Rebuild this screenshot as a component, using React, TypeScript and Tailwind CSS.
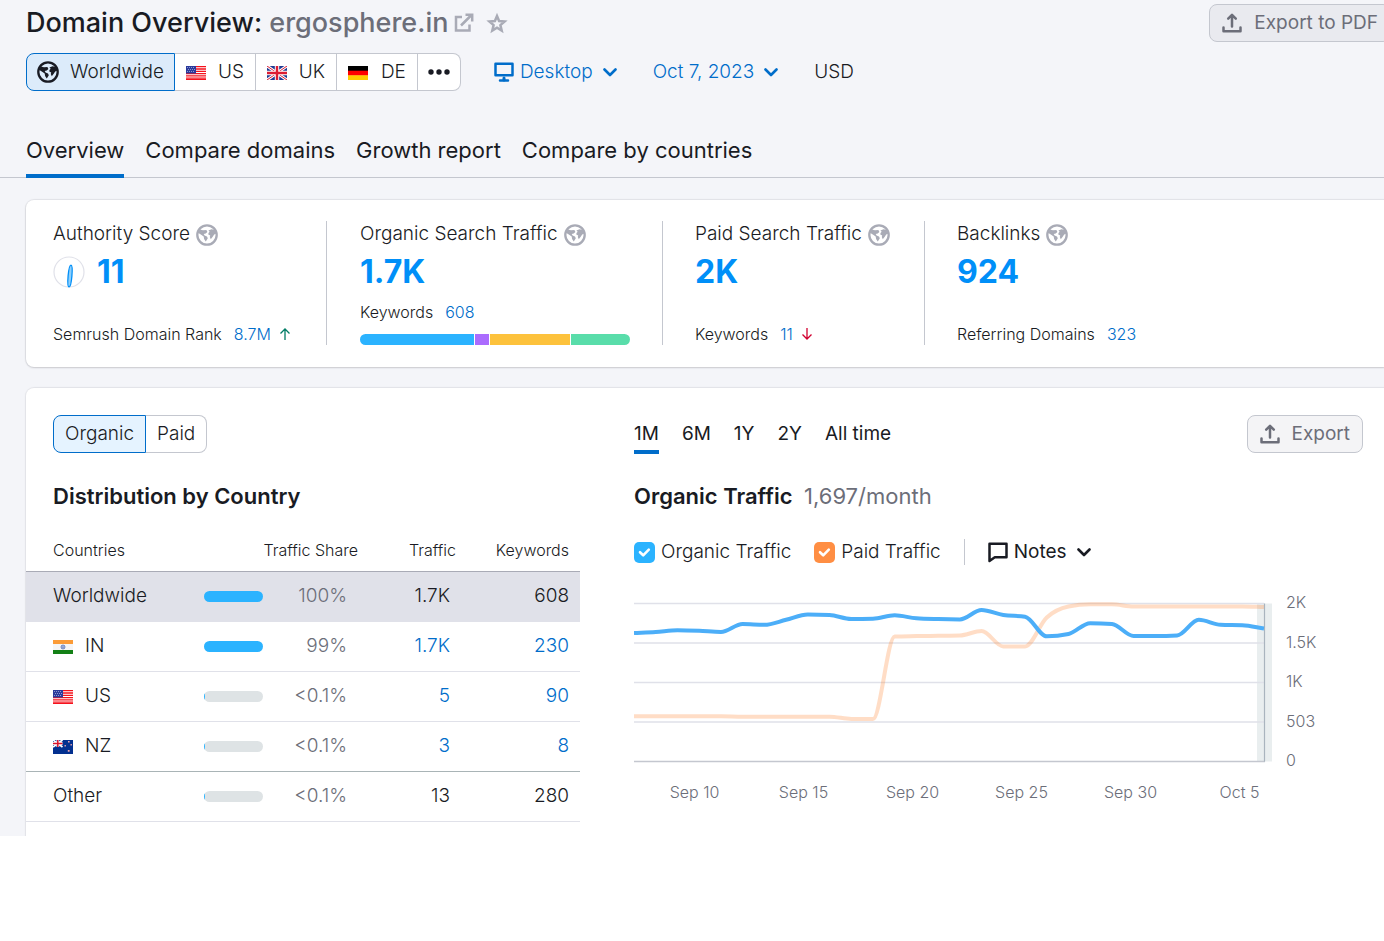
import { useState, ReactNode } from 'react'

interface CountryRow {
  code: string
  flag?: 'in' | 'us' | 'nz'
  share: string
  percent: number
  traffic: string
  keywords: string
  linked: boolean
}

const ROWS: CountryRow[] = [
  { code: 'Worldwide', share: '100%', percent: 100, traffic: '1.7K', keywords: '608', linked: false },
  { code: 'IN', flag: 'in', share: '99%', percent: 100, traffic: '1.7K', keywords: '230', linked: true },
  { code: 'US', flag: 'us', share: '<0.1%', percent: 2, traffic: '5', keywords: '90', linked: true },
  { code: 'NZ', flag: 'nz', share: '<0.1%', percent: 2, traffic: '3', keywords: '8', linked: true },
  { code: 'Other', share: '<0.1%', percent: 2, traffic: '13', keywords: '280', linked: false },
]

// Daily values, one per day, already in plot units (0 = 2K line, 158 = zero line)
const ORGANIC = [
  29.5, 28.5, 26.7, 27.3, 28.5, 20.5, 21.3, 16.3, 11, 11.5, 15.5, 15.2, 11.8, 14.8, 15.6,
  15.9, 6.5, 11.5, 13.2, 32.8, 30.5, 19.7, 20.5, 32.6, 32.6, 32, 16.3, 21.3, 21.8, 25,
]
const PAID = [
  112.8, 112.8, 112.8, 112.8, 112.8, 113.2, 113.2, 113.2, 113.2, 113.2, 115.4, 115.6, 33, 32.6, 32.3,
  32, 27.5, 43, 43, 14, 3, 0.8, 0.8, 3, 3, 3, 3, 3, 3, 3.6,
]

const BREAKDOWN = [
  { color: 'bg-[#2bb3ff]', value: 114 },
  { color: 'bg-[#ab6cfe]', value: 14 },
  { color: 'bg-[#fdc23c]', value: 80 },
  { color: 'bg-[#59ddaa]', value: 59 },
]

// Monotone cubic, so flat stretches stay flat and steps don't overshoot
function monotonePath(values: number[], width: number, top: number) {
  const h = width / (values.length - 1)
  const d = values.slice(1).map((v, i) => (v - values[i]) / h)
  const m = values.map((_, i) => {
    if (i === 0) return d[0]
    if (i === values.length - 1) return d[i - 1]
    if (d[i - 1] * d[i] <= 0) return 0
    return Math.sign(d[i]) * Math.min(Math.abs(d[i - 1]), Math.abs(d[i]), Math.abs(d[i - 1] + d[i]) / 4) * 2
  })
  let out = `M0 ${values[0] + top}`
  for (let i = 1; i < values.length; i++) {
    const x0 = (i - 1) * h
    const x1 = i * h
    const a = values[i - 1] + top
    const b = values[i] + top
    out += `C${x0 + h / 3} ${a + (m[i - 1] * h) / 3} ${x1 - h / 3} ${b - (m[i] * h) / 3} ${x1} ${b}`
  }
  return out
}

function Globe({ className = '' }: { className?: string }) {
  return (
    <svg viewBox="0 0 22 22" className={`size-[22px] shrink-0 ${className}`} aria-hidden="true">
      <circle cx="11" cy="11" r="9.7" fill="none" stroke="currentColor" strokeWidth="2.3" />
      <path d="M1.6 8.6 4 5.4 7 6.3 10.4 6l1 2-1.7 1.5-2 .4.9 1.7 2.4 1 .8 1.7-1.2 2-.9 1.2-1.6-2.6-.4-2.4-2.9-1.9z" fill="currentColor" />
      <path d="m12.4 6.6 3.2-1.4 3.6.8 1.2 3.6-2.2 1-1.5 2.2-1.9 2.4-1-2.2.4-1.6-1.9-.8.2-1.6 1.2-1.2z" fill="currentColor" />
    </svg>
  )
}

function Chevron() {
  return (
    <svg viewBox="0 0 14 10" className="h-2.5 w-3.5 shrink-0" fill="none" stroke="currentColor" strokeWidth="2.6" strokeLinecap="round" strokeLinejoin="round" aria-hidden="true">
      <path d="m1.5 2.5 5.5 5.5 5.5-5.5" />
    </svg>
  )
}

function Upload() {
  return (
    <svg viewBox="0 0 20 20" className="size-5 shrink-0" fill="none" stroke="currentColor" strokeWidth="2.5" strokeLinecap="round" strokeLinejoin="round" aria-hidden="true">
      <path d="M1.5 14.5v3.8h17v-3.8M10 13.5V2.5M6.2 5.6 10 1.8l3.8 3.8" />
    </svg>
  )
}

function Flag({ code }: { code: string }) {
  return (
    <svg viewBox="0 0 20 14" className="mt-0.5 h-3.5 w-5 shrink-0" aria-hidden="true">
      {code === 'us' && (
        <>
          <path d="M0 0h20v14H0z" fill="#fff" />
          <path d="M0 .7h20M0 3h20M0 5.3h20M0 7.6h20M0 9.9h20M0 12.2h20M0 13.6h20" stroke="#f5121c" strokeWidth="1.3" />
          <path d="M0 0h10v7.5H0z" fill="#2a3a9c" />
          <path d="M1 1.5h8M2 3.5h7M1 5.5h8" stroke="#a6aedb" strokeWidth=".8" strokeDasharray="1 1" />
        </>
      )}
      {code === 'uk' && (
        <>
          <path d="M0 0h20v14H0z" fill="#1e3a93" />
          <path d="m0 0 20 14M20 0 0 14" stroke="#fff" strokeWidth="3" />
          <path d="m0 0 20 14M20 0 0 14" stroke="#dc1c33" strokeWidth="1" />
          <path d="M10 0v14M0 7h20" stroke="#fff" strokeWidth="4.4" />
          <path d="M10 0v14M0 7h20" stroke="#dc1c33" strokeWidth="2.4" />
        </>
      )}
      {code === 'de' && (
        <>
          <path d="M0 0h20v5H0z" fill="#000" />
          <path d="M0 4.7h20v5H0z" fill="#f00" />
          <path d="M0 9.3h20V14H0z" fill="#fc0" />
        </>
      )}
      {code === 'in' && (
        <>
          <path d="M0 0h20v14H0z" fill="#f5f5f5" />
          <path d="M0 0h20v4H0z" fill="#fb9b36" />
          <path d="M0 10h20v4H0z" fill="#138016" />
          <circle cx="10" cy="7" r="2" fill="#b7c4e6" stroke="#4561a8" strokeWidth=".7" />
          <circle cx="10" cy="7" r=".6" fill="#1c3b8c" />
        </>
      )}
      {code === 'nz' && (
        <>
          <path d="M0 0h20v14H0z" fill="#03308f" />
          <path d="m0 0 9.5 7M9.5 0 0 7" stroke="#fff" strokeWidth="1.8" />
          <path d="M4.8 0v7M0 3.5h9.5" stroke="#fff" strokeWidth="2.8" />
          <path d="M4.8 0v7M0 3.5h9.5" stroke="#d8152e" strokeWidth="1.5" />
          <path d="M15 1h1.6v1.6H15zM11.5 5h1.4v1.4h-1.4zM17.5 4h1.4v1.4h-1.4zM14.8 10h1.8v1.8h-1.8z" fill="#e9a3ae" />
        </>
      )}
    </svg>
  )
}

function Metric({ title, value, badge, className, children }: {
  title: string
  value: string
  badge?: ReactNode
  className: string
  children: ReactNode
}) {
  return (
    <div className={`flex h-[124px] shrink-0 flex-col ${className}`}>
      <div className="flex h-[26px] items-center gap-1.5">
        <span>{title}</span>
        <Globe className="mt-0.5 text-[#a9abb6]" />
      </div>
      <div className="mt-[5px] flex h-10 items-center gap-3">
        {badge}
        <a href="#" className="text-[32px] leading-10 font-bold text-[#008ff8]">{value}</a>
      </div>
      {children}
    </div>
  )
}

function SeriesToggle({ label, color }: { label: string; color: string }) {
  return (
    <label className="flex items-center gap-1.5">
      <span className="relative flex size-[21px]">
        <input type="checkbox" defaultChecked className={`peer size-[21px] appearance-none rounded-[5px] border border-[#c4c7cf] checked:border-0 ${color}`} />
        <svg viewBox="0 0 21 21" className="pointer-events-none absolute inset-0 hidden peer-checked:block" fill="none" stroke="#fff" strokeWidth="2.6" strokeLinecap="round" strokeLinejoin="round" aria-hidden="true">
          <path d="m6 10.2 3.2 3.1 5.6-5.6" />
        </svg>
      </span>
      {label}
    </label>
  )
}

function TrafficChart() {
  return (
    <div className="mt-[35px] flex gap-3.5">
      <div className="min-w-0 flex-1">
        <svg viewBox="0 0 638 164" preserveAspectRatio="none" className="block h-[164px] w-full" role="img" aria-label="Organic and paid traffic over the last month">
          <path d="M623 3.5h15v158h-15z" fill="#e9eeef" />
          <path d="M0 3.5h630M0 43h630M0 82.5h630M0 122h630" stroke="#e0e1e9" strokeWidth="1.5" />
          <path d="M0 161.5h631" stroke="#c4c7cf" strokeWidth="1.5" />
          <path d="M630.5 3.5v158" stroke="#a9b4be" strokeWidth="1.2" />
          <path d={monotonePath(PAID, 630, 3.5)} fill="none" stroke="#ff8e43" strokeOpacity=".3" strokeWidth="4" />
          <path d={monotonePath(ORGANIC, 630, 3.5)} fill="none" stroke="#4caef8" strokeWidth="4" />
        </svg>
        <div className="mt-4 -mr-[22px] grid grid-cols-6 pl-1.5 text-center text-base leading-6 text-[#6c6e79]">
          {['Sep 10', 'Sep 15', 'Sep 20', 'Sep 25', 'Sep 30', 'Oct 5'].map((d) => (
            <span key={d}>{d}</span>
          ))}
        </div>
      </div>
      <div className="-mt-2 flex h-[178px] w-[77px] flex-col justify-between text-base leading-5 text-[#6c6e79]">
        {['2K', '1.5K', '1K', '503', '0'].map((t) => (
          <span key={t}>{t}</span>
        ))}
      </div>
    </div>
  )
}

export default function App() {
  const [tab, setTab] = useState('Overview')
  const [range, setRange] = useState('1M')

  return (
    <div className="min-h-screen bg-white font-['Inter',sans-serif] text-[19px] leading-[26px] font-light text-[#191b23]">
      <div className="h-[836px] overflow-hidden bg-[#f4f5f9]">
        <header className="border-b border-[#c4c7cf]">
          <div className="flex items-start justify-between pl-[26px]">
            <div className="flex h-[46px] items-center">
              <h1 className="text-[27px] leading-9 font-medium whitespace-nowrap">
                Domain Overview: <span className="text-[#6c6e79]">ergosphere.in</span>
              </h1>
              <a href="#" className="ml-1.5 text-[#a9abb6]" aria-label="Open ergosphere.in">
                <svg viewBox="0 0 20 20" className="size-5" fill="none" stroke="currentColor" strokeWidth="2.5" aria-hidden="true">
                  <path d="M8 4H2v13.5h13.5V11.5M7 12.5 17.5 2M11.5 1.8h6.7v6.7" />
                </svg>
              </a>
              <button className="ml-3 text-[#a9abb6]" aria-label="Add to favorites">
                <svg viewBox="0 0 22 22" className="size-[22px]" fill="none" stroke="currentColor" strokeWidth="2.5" aria-hidden="true">
                  <path d="m11 4 2.1 5 5.5.5-4.2 3.6 1.3 5.5-4.7-2.9-4.7 2.9 1.3-5.5-4.2-3.6 5.5-.5z" />
                </svg>
              </button>
            </div>
            <button className="mt-1 -mr-[7px] flex h-[38px] items-center gap-3 rounded-lg border border-[#c4c7cf] bg-[#e9eaef] px-3 font-normal whitespace-nowrap text-[#6c6e79]">
              <Upload />
              Export to PDF
            </button>
          </div>

          <div className="mt-[7px] flex items-center pl-[26px]">
            <div className="flex h-[38px]">
              <button className="flex items-center gap-[11px] rounded-l-lg border border-[#006dca] bg-[#dcebfa] px-2.5">
                <Globe />
                Worldwide
              </button>
              {['US', 'UK', 'DE'].map((c) => (
                <button key={c} className="flex w-[81px] items-center justify-between border-y border-r border-[#c4c7cf] bg-white px-[11px]">
                  <Flag code={c.toLowerCase()} />
                  {c}
                </button>
              ))}
              <button className="flex w-[43px] items-center justify-center rounded-r-lg border-y border-r border-[#c4c7cf] bg-white" aria-label="More countries">
                <svg viewBox="0 0 22 6" className="h-1.5 w-[22px]" fill="currentColor" aria-hidden="true">
                  <circle cx="3" cy="3" r="2.7" />
                  <circle cx="11" cy="3" r="2.7" />
                  <circle cx="19" cy="3" r="2.7" />
                </svg>
              </button>
            </div>
            <button className="ml-[33px] flex items-center text-[#006dca]">
              <svg viewBox="0 0 20 20" className="mr-1.5 size-5" fill="none" stroke="currentColor" strokeWidth="2.5" strokeLinecap="round" strokeLinejoin="round" aria-hidden="true">
                <path d="M1.5 1.8h17v11.4h-17zM6 18.5h8" />
                <path d="M10 16v2" strokeWidth="3" />
              </svg>
              <span className="mr-2.5">Desktop</span>
              <Chevron />
            </button>
            <button className="ml-9 flex items-center gap-2.5 text-[#006dca]">
              Oct 7, 2023
              <Chevron />
            </button>
            <span className="ml-9">USD</span>
          </div>

          <nav className="mt-9 flex gap-[21px] pl-[26px]">
            {['Overview', 'Compare domains', 'Growth report', 'Compare by countries'].map((t) => (
              <button
                key={t}
                onClick={() => setTab(t)}
                className={`-mb-px h-[51px] border-b-4 pb-0.5 text-[22px] leading-7 font-normal whitespace-nowrap ${tab === t ? 'border-[#006dca]' : 'border-transparent'}`}
              >
                {t}
              </button>
            ))}
          </nav>
        </header>

        <main className="pl-[26px]">
          <section className="mt-[22px] flex h-[167px] rounded-l-lg bg-white px-[27px] pt-[21px] shadow-[0_0_1px_1px_rgba(25,27,35,0.08),0_1px_2px_rgba(25,27,35,0.12)]">
            <Metric
              title="Authority Score"
              value="11"
              className="w-[274px] border-r border-[#c4c7cf]"
              badge={
                <svg viewBox="0 0 32 32" className="size-8" aria-hidden="true">
                  <circle cx="16" cy="16" r="15" fill="#fff" stroke="#e0e1e9" strokeWidth="1.2" />
                  <ellipse cx="17" cy="20" rx="1.9" ry="11" transform="rotate(5 17 20)" fill="#8fd0fb" stroke="#008ff8" strokeWidth="1.3" />
                </svg>
              }
            >
              <div className="mt-auto flex items-center text-base leading-[22px]">
                Semrush Domain Rank
                <a href="#" className="ml-3 text-[#006dca]">8.7M</a>
                <svg viewBox="0 0 12 12" className="ml-2 size-3" fill="none" stroke="#007c65" strokeWidth="1.3" aria-label="up">
                  <path d="M6 12V1M1.5 5.5 6 1l4.5 4.5" />
                </svg>
              </div>
            </Metric>
            <Metric title="Organic Search Traffic" value="1.7K" className="w-[336px] border-r border-[#c4c7cf] pr-8 pl-[33px]">
              <div className="mt-[9px] flex text-base leading-[22px]">
                Keywords
                <a href="#" className="ml-3 text-[#006dca]">608</a>
              </div>
              <div className="mt-auto flex h-[11px] gap-px overflow-hidden rounded-full">
                {BREAKDOWN.map((b) => (
                  <div key={b.color} className={b.color} style={{ flexGrow: b.value }} />
                ))}
              </div>
            </Metric>
            <Metric title="Paid Search Traffic" value="2K" className="w-[262px] border-r border-[#c4c7cf] pl-8">
              <div className="mt-auto flex items-center text-base leading-[22px]">
                Keywords
                <a href="#" className="ml-3 text-[#006dca]">11</a>
                <svg viewBox="0 0 12 12" className="ml-2 size-3" fill="none" stroke="#d1002f" strokeWidth="1.3" aria-label="down">
                  <path d="M6 0v11M1.5 6.5 6 11l4.5-4.5" />
                </svg>
              </div>
            </Metric>
            <Metric title="Backlinks" value="924" className="pl-8">
              <div className="mt-auto flex text-base leading-[22px]">
                Referring Domains
                <a href="#" className="ml-3 text-[#006dca]">323</a>
              </div>
            </Metric>
          </section>

          <section className="mt-[21px] flex h-[600px] gap-[54px] rounded-l-lg bg-white pt-[27px] shadow-[0_0_1px_1px_rgba(25,27,35,0.08)]">
            <div className="w-[554px] shrink-0">
              <div className="flex h-[38px] pl-[27px]">
                <button className="rounded-l-lg border border-[#006dca] bg-[#e5f3ff] px-[11px]">Organic</button>
                <button className="rounded-r-lg border-y border-r border-[#c4c7cf] px-[11px]">Paid</button>
              </div>
              <h2 className="mt-[29px] pl-[27px] text-[22px] leading-7 font-semibold">Distribution by Country</h2>
              <table className="mt-5 w-full table-fixed border-collapse">
                <thead>
                  <tr className="h-[41px] border-b border-[#a9abb6] text-base leading-6">
                    <th className="w-[178px] pl-[27px] text-left font-light">Countries</th>
                    <th className="w-[154px] text-right font-light">Traffic Share</th>
                    <th className="w-[98px] text-right font-light">Traffic</th>
                    <th className="pr-[11px] text-right font-light">Keywords</th>
                  </tr>
                </thead>
                <tbody>
                  {ROWS.map((r) => (
                    <tr
                      key={r.code}
                      className={`h-[50px] border-b ${r.code === 'Worldwide' ? 'bg-[#e0e1e9]' : ''} ${r.code === 'NZ' ? 'border-[#a9b4b6]' : 'border-[#e0e1e9]'}`}
                    >
                      <td className="pl-[27px]">
                        <span className="flex items-center gap-3">
                          {r.flag && <Flag code={r.flag} />}
                          {r.code}
                        </span>
                      </td>
                      <td className="pr-[11px] text-[#6c6e79]">
                        <span className="flex items-center justify-between">
                          <span className="h-[11px] w-[59px] overflow-hidden rounded-full bg-[#dee3e5]">
                            <span className="block h-full bg-[#2bb3ff]" style={{ width: `${r.percent}%` }} />
                          </span>
                          {r.share}
                        </span>
                      </td>
                      <td className="pr-1.5 text-right">
                        {r.linked ? <a href="#" className="text-[#006dca]">{r.traffic}</a> : r.traffic}
                      </td>
                      <td className="pr-[11px] text-right">
                        {r.linked ? <a href="#" className="text-[#006dca]">{r.keywords}</a> : r.keywords}
                      </td>
                    </tr>
                  ))}
                </tbody>
              </table>
            </div>

            <div className="min-w-0 flex-1 pr-[21px]">
              <div className="flex h-[38px] items-start justify-between">
                <div className="flex gap-[23px] pt-1.5 font-normal">
                  {['1M', '6M', '1Y', '2Y', 'All time'].map((r) => (
                    <button
                      key={r}
                      onClick={() => setRange(r)}
                      className={`h-[33px] border-b-4 pb-1 leading-6 ${range === r ? 'border-[#006dca]' : 'border-transparent'}`}
                    >
                      {r}
                    </button>
                  ))}
                </div>
                <button className="flex h-[38px] items-center gap-3 rounded-lg border border-[#c4c7cf] bg-[#f4f4f6] px-3 font-normal text-[#6c6e79]">
                  <Upload />
                  Export
                </button>
              </div>
              <h2 className="mt-[29px] text-[22px] leading-7 font-semibold">
                Organic Traffic <span className="ml-1.5 font-normal text-[#6c6e79]">1,697/month</span>
              </h2>
              <div className="mt-[29px] flex h-[26px] items-center">
                <SeriesToggle label="Organic Traffic" color="checked:bg-[#2bb3ff]" />
                <div className="ml-[23px]">
                  <SeriesToggle label="Paid Traffic" color="checked:bg-[#ff8e43]" />
                </div>
                <div className="mx-[23px] h-[26px] w-px bg-[#c4c7cf]" />
                <button className="flex items-center font-normal">
                  <svg viewBox="0 0 20 21" className="mr-1.5 h-[21px] w-5" fill="none" stroke="currentColor" strokeWidth="2.5" strokeLinejoin="round" aria-hidden="true">
                    <path d="M1.5 1.7h17v13.5H6.8L1.5 19z" />
                  </svg>
                  <span className="mr-2.5">Notes</span>
                  <Chevron />
                </button>
              </div>
              <TrafficChart />
            </div>
          </section>
        </main>
      </div>
    </div>
  )
}
